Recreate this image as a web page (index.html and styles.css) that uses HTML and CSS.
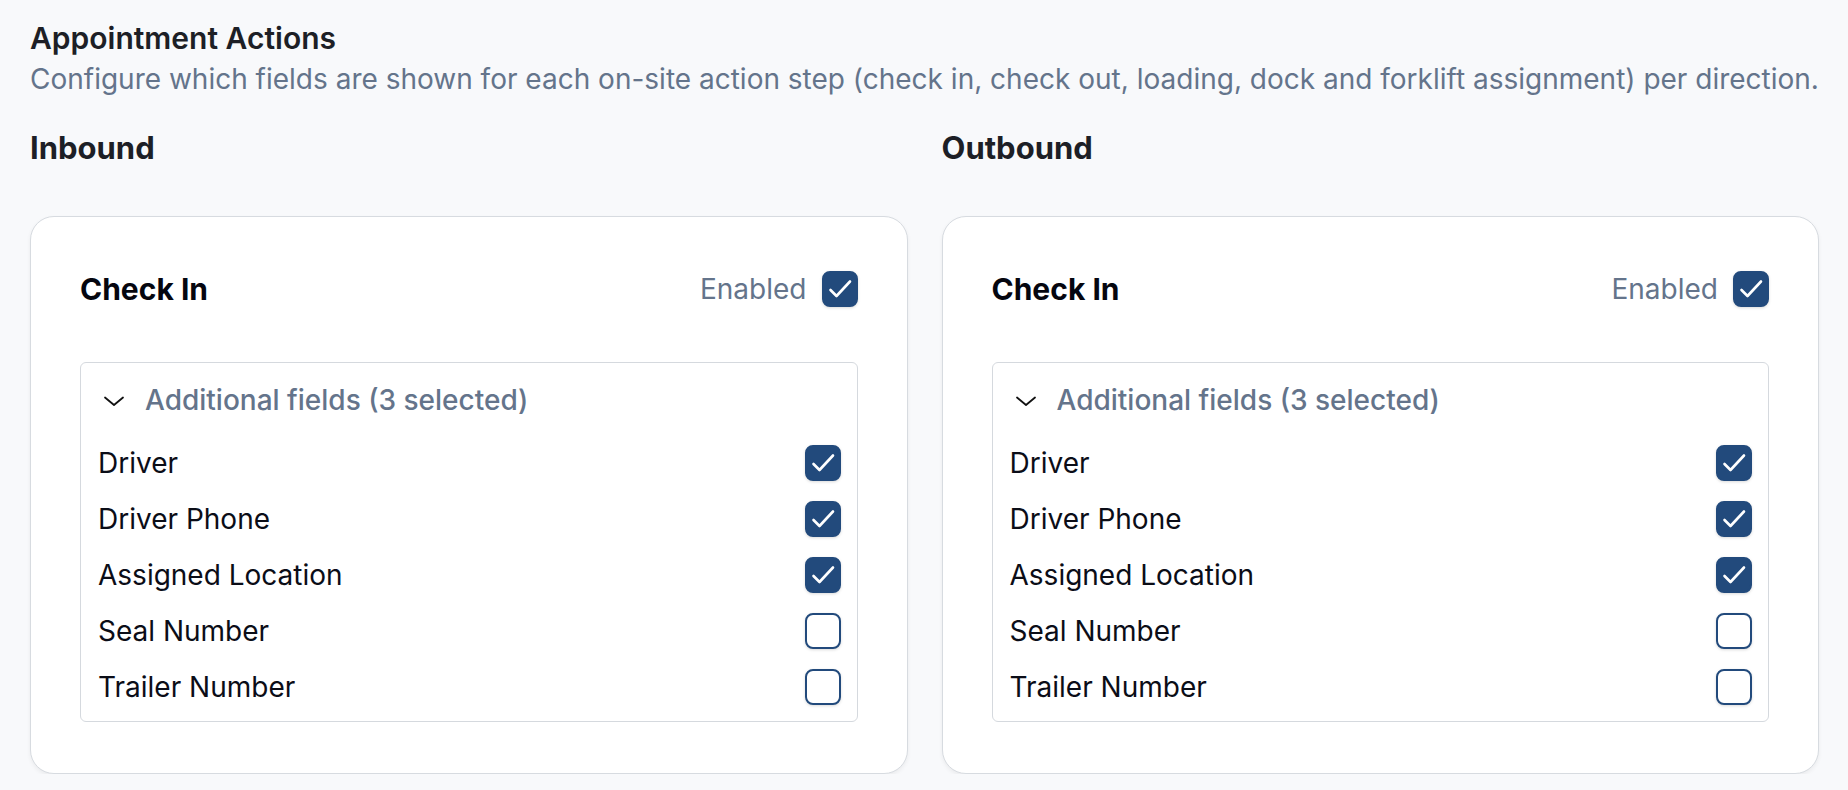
FILE: index.html
```html
<!DOCTYPE html>
<html lang="en">
<head>
    <meta charset="UTF-8">
    <meta name="viewport" content="width=device-width, initial-scale=1.0">
    <title>Appointment Actions</title>
    <link rel="stylesheet" href="styles.css">
</head>
<body>
    <main class="page">
        <h1 class="page-title">Appointment Actions</h1>
        <p class="page-desc">Configure which fields are shown for each on-site action step (check in, check out, loading, dock and forklift assignment) per direction.</p>

        <div class="directions">
            <section class="direction">
                <h2 class="direction-title">Inbound</h2>
                <div class="step-card">
                    <div class="step-head">
                        <h3>Check In</h3>
                        <label class="enabled">
                            <span>Enabled</span>
                            <span class="check checked"><svg viewBox="0 0 36 36"><path d="M8.5 19 L14.5 25 L28 10.5"/></svg></span>
                        </label>
                    </div>
                    <div class="fields-box">
                        <div class="fields-toggle">
                            <svg class="chevron" viewBox="0 0 24 24"><path d="M3 9.5 L12 17 L21 9.5"/></svg>
                            <span>Additional fields (3 selected)</span>
                        </div>
                        <ul class="field-list">
                            <li><span>Driver</span><span class="check checked"><svg viewBox="0 0 36 36"><path d="M8.5 19 L14.5 25 L28 10.5"/></svg></span></li>
                            <li><span>Driver Phone</span><span class="check checked"><svg viewBox="0 0 36 36"><path d="M8.5 19 L14.5 25 L28 10.5"/></svg></span></li>
                            <li><span>Assigned Location</span><span class="check checked"><svg viewBox="0 0 36 36"><path d="M8.5 19 L14.5 25 L28 10.5"/></svg></span></li>
                            <li><span>Seal Number</span><span class="check"></span></li>
                            <li><span>Trailer Number</span><span class="check"></span></li>
                        </ul>
                    </div>
                </div>
            </section>

            <section class="direction">
                <h2 class="direction-title">Outbound</h2>
                <div class="step-card">
                    <div class="step-head">
                        <h3>Check In</h3>
                        <label class="enabled">
                            <span>Enabled</span>
                            <span class="check checked"><svg viewBox="0 0 36 36"><path d="M8.5 19 L14.5 25 L28 10.5"/></svg></span>
                        </label>
                    </div>
                    <div class="fields-box">
                        <div class="fields-toggle">
                            <svg class="chevron" viewBox="0 0 24 24"><path d="M3 9.5 L12 17 L21 9.5"/></svg>
                            <span>Additional fields (3 selected)</span>
                        </div>
                        <ul class="field-list">
                            <li><span>Driver</span><span class="check checked"><svg viewBox="0 0 36 36"><path d="M8.5 19 L14.5 25 L28 10.5"/></svg></span></li>
                            <li><span>Driver Phone</span><span class="check checked"><svg viewBox="0 0 36 36"><path d="M8.5 19 L14.5 25 L28 10.5"/></svg></span></li>
                            <li><span>Assigned Location</span><span class="check checked"><svg viewBox="0 0 36 36"><path d="M8.5 19 L14.5 25 L28 10.5"/></svg></span></li>
                            <li><span>Seal Number</span><span class="check"></span></li>
                            <li><span>Trailer Number</span><span class="check"></span></li>
                        </ul>
                    </div>
                </div>
            </section>
        </div>
    </main>
</body>
</html>
```

FILE: styles.css
```css
* {
    box-sizing: border-box;
    margin: 0;
    padding: 0;
}

body {
    font-family: 'Inter', 'Noto Sans', sans-serif;
    background-color: #f8f9fb;
    color: #111827;
}

.page {
    padding: 21px 29px 0 30px;
}

.page-title {
    font-size: 30px;
    line-height: 34px;
    font-weight: 600;
    color: #1d1f26;
}

.page-desc {
    margin-top: 7px;
    font-size: 28px;
    line-height: 34px;
    color: #64748b;
}

.directions {
    display: grid;
    grid-template-columns: 1fr 1fr;
    gap: 34px;
    margin-top: 34px;
}

.direction-title {
    font-size: 31px;
    line-height: 36px;
    font-weight: 700;
    color: #1d1f26;
    margin-bottom: 50px;
}

.step-card {
    background-color: #fff;
    border: 1px solid #d7dbe0;
    border-radius: 24px;
    box-shadow: 0 2px 4px rgba(0, 0, 0, 0.06);
    padding: 54px 49px 51px;
}

.step-head {
    display: flex;
    justify-content: space-between;
    align-items: center;
    height: 36px;
}

.step-head h3 {
    font-size: 30px;
    font-weight: 700;
    color: #05060f;
}

.enabled {
    display: flex;
    align-items: center;
    gap: 15px;
    font-size: 28px;
    color: #64748b;
}

.fields-box {
    margin-top: 55px;
    border: 1px solid #d5d9de;
    border-radius: 6px;
    padding: 19px 16px 16px 17px;
}

.fields-toggle {
    display: flex;
    align-items: center;
    gap: 19px;
    height: 36px;
    padding-left: 4px;
    margin-bottom: 27px;
    font-size: 28px;
    font-weight: 500;
    color: #64748b;
}

.chevron {
    width: 24px;
    height: 24px;
    fill: none;
    stroke: #111;
    stroke-width: 1.8;
    stroke-linecap: round;
    stroke-linejoin: round;
}

.field-list {
    list-style: none;
    display: flex;
    flex-direction: column;
    gap: 20px;
}

.field-list li {
    display: flex;
    justify-content: space-between;
    align-items: center;
    height: 36px;
    font-size: 28px;
    color: #0b0d17;
}

/* checkbox look */
.check {
    width: 36px;
    height: 36px;
    border: 2px solid #224a7c;
    border-radius: 8px;
    background-color: #fff;
    box-shadow: 0 1px 3px rgba(0, 0, 0, 0.15);
    display: flex;
    flex-shrink: 0;
}

.check.checked {
    background-color: #224a7c;
}

.check svg {
    fill: none;
    stroke: #fff;
    stroke-width: 2.6;
    stroke-linecap: round;
    stroke-linejoin: round;
    margin: -2px;
    width: 36px;
    height: 36px;
}
```
